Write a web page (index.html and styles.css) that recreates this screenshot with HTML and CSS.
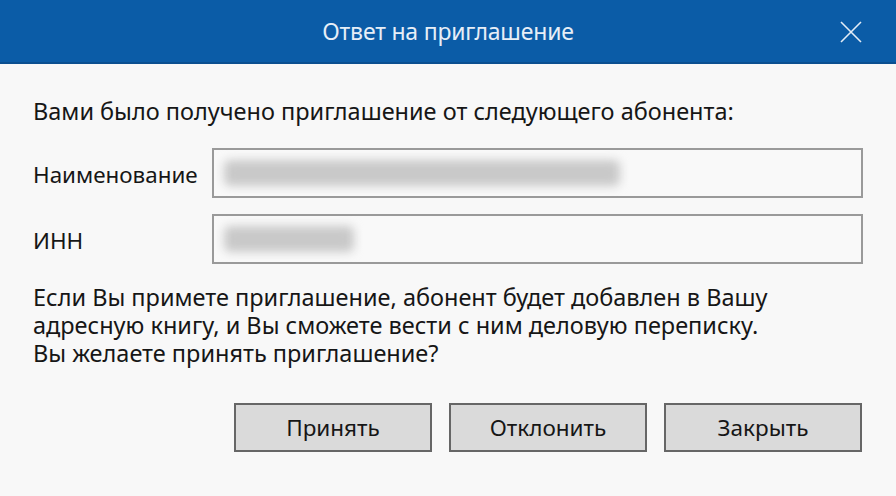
FILE: index.html
```html
<!DOCTYPE html>
<html lang="ru">
<head>
<meta charset="utf-8">
<title>Ответ на приглашение</title>
<link rel="stylesheet" href="styles.css">
</head>
<body>
<div class="dialog">
  <header class="titlebar">
    <span class="title">Ответ на приглашение</span>
    <span class="close" aria-label="Закрыть">
      <svg width="24" height="24" viewBox="0 0 24 24"><path d="M2 2L22 22M22 2L2 22" stroke="#e3ecf6" stroke-width="1.6" fill="none"/></svg>
    </span>
  </header>
  <main class="content">
    <p class="intro">Вами было получено приглашение от следующего абонента:</p>
    <div class="form">
      <label class="label">Наименование</label>
      <div class="field"><span class="blur blur-name"></span></div>
      <label class="label">ИНН</label>
      <div class="field"><span class="blur blur-inn"></span></div>
    </div>
    <p class="message">Если Вы примете приглашение, абонент будет добавлен в Вашу<br>адресную книгу, и Вы сможете вести с ним деловую переписку.<br>Вы желаете принять приглашение?</p>
    <div class="buttons">
      <button class="btn">Принять</button>
      <button class="btn">Отклонить</button>
      <button class="btn">Закрыть</button>
    </div>
  </main>
</div>
</body>
</html>
```
FILE: styles.css
```css
* { box-sizing: border-box; }
html, body { margin: 0; padding: 0; }
body {
  width: 896px;
  height: 496px;
  background: #f8f8f8;
  font-family: "Noto Sans", "Open Sans", sans-serif;
  color: #161616;
  overflow: hidden;
}
.dialog { display: flex; flex-direction: column; height: 100%; }
.titlebar {
  height: 64px;
  background: #0b5ca7;
  border-bottom: 2px solid #0b4f90;
  display: flex;
  align-items: center;
  justify-content: center;
  position: relative;
}
.title {
  color: #e6eef7;
  font-size: 23px;
  letter-spacing: -0.2px;
}
.close {
  position: absolute;
  right: 33px;
  top: 20px;
  width: 24px;
  height: 24px;
}
.close svg { display: block; }
.content {
  padding: 33px 33px 0 33px;
}
.intro {
  margin: 0;
  font-size: 23.5px;
  line-height: 28px;
}
.form {
  margin-top: 23px;
  display: grid;
  grid-template-columns: 179px 651px;
  grid-auto-rows: 50px;
  row-gap: 16px;
  align-items: center;
}
.label {
  font-size: 22.4px;
  line-height: 28px;
  padding-top: 4px;
}
.field {
  height: 50px;
  border: 2px solid #9a9a9a;
  background: #f9f9f9;
  display: flex;
  align-items: center;
  padding-left: 10px;
}
.blur {
  display: block;
  height: 26px;
  background: #c9c9c9;
  border-radius: 6px;
  filter: blur(5px);
}
.blur-name { width: 396px; }
.blur-inn { width: 130px; }
.message {
  margin: 19px 0 0 0;
  font-size: 23.5px;
  line-height: 28px;
}
.buttons {
  margin-top: 36px;
  display: flex;
  justify-content: flex-end;
  gap: 17px;
  padding-right: 1px;
}
.btn {
  width: 198px;
  height: 49px;
  background: #dadada;
  border: 2px solid #666;
  font-family: "Noto Sans", "Open Sans", sans-serif;
  font-size: 22.5px;
  color: #161616;
  padding: 0;
}
```
